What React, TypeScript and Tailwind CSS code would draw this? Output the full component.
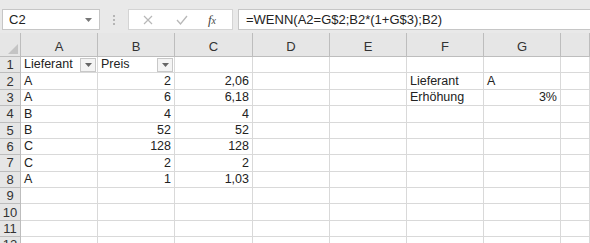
import React from 'react'

const cols = ['A', 'B', 'C', 'D', 'E', 'F', 'G', '']

type Cell = { v: string; right?: boolean; filter?: boolean }

const rows: Record<number, Record<number, Cell>> = {
  1: { 0: { v: 'Lieferant', filter: true }, 1: { v: 'Preis', filter: true } },
  2: { 0: { v: 'A' }, 1: { v: '2', right: true }, 2: { v: '2,06', right: true }, 5: { v: 'Lieferant' }, 6: { v: 'A' } },
  3: { 0: { v: 'A' }, 1: { v: '6', right: true }, 2: { v: '6,18', right: true }, 5: { v: 'Erhöhung' }, 6: { v: '3%', right: true } },
  4: { 0: { v: 'B' }, 1: { v: '4', right: true }, 2: { v: '4', right: true } },
  5: { 0: { v: 'B' }, 1: { v: '52', right: true }, 2: { v: '52', right: true } },
  6: { 0: { v: 'C' }, 1: { v: '128', right: true }, 2: { v: '128', right: true } },
  7: { 0: { v: 'C' }, 1: { v: '2', right: true }, 2: { v: '2', right: true } },
  8: { 0: { v: 'A' }, 1: { v: '1', right: true }, 2: { v: '1,03', right: true } },
}

const FilterButton = () => (
  <div className="absolute right-[1px] top-[1px] w-[16px] h-[14px] border border-[#c8c8c8] bg-[#f4f4f4] flex items-center justify-center">
    <svg width="7" height="4" viewBox="0 0 7 4">
      <path d="M0 0h7L3.5 4z" fill="#666" />
    </svg>
  </div>
)

export default function App() {
  return (
    <div className="w-[590px] h-[243px] overflow-hidden bg-white font-['Liberation_Sans',Arial,sans-serif] text-[#222]">
      {/* formula bar */}
      <div className="h-[33px] bg-[#e9e9e9] flex items-start pt-[9px] pl-[2px]">
        <div className="w-[98px] h-[21px] bg-white border border-[#c6c6c6] flex items-center pl-[6px] pr-[7px] text-[13px]">
          <span className="flex-1">C2</span>
          <svg width="7" height="4" viewBox="0 0 7 4">
            <path d="M0 0h7L3.5 4z" fill="#777" />
          </svg>
        </div>
        <div className="w-[28px] h-[21px] flex flex-col items-center justify-center gap-[2px]">
          <div className="w-[2px] h-[2px] bg-[#b5b5b5]" />
          <div className="w-[2px] h-[2px] bg-[#b5b5b5]" />
          <div className="w-[2px] h-[2px] bg-[#b5b5b5]" />
        </div>
        <div className="w-[105px] h-[21px] bg-white border border-[#d4d4d4] flex items-center">
          <div className="w-[38px] flex justify-center text-[#b8b8b8]">
            <svg width="10" height="10" viewBox="0 0 10 10">
              <path d="M1 1l8 8M9 1l-8 8" stroke="#b8b8b8" strokeWidth="1.2" />
            </svg>
          </div>
          <div className="w-[30px] flex justify-center">
            <svg width="12" height="10" viewBox="0 0 12 10">
              <path d="M1 5l3.5 4L11 1" stroke="#b8b8b8" strokeWidth="1.3" fill="none" />
            </svg>
          </div>
          <div className="w-[30px] flex justify-center font-['Liberation_Serif',serif] italic text-[13px] text-[#444]">
            <span>f<span className="text-[10px]">x</span></span>
          </div>
        </div>
        <div className="ml-[5px] flex-1 h-[21px] bg-white border border-[#c6c6c6] border-r-0 flex items-center pl-[7px] text-[13px]">
          =WENN(A2=G$2;B2*(1+G$3);B2)
        </div>
      </div>

      {/* grid */}
      <div className="grid grid-cols-[21px_77px_77px_78px_77px_77px_77px_77px_1fr] grid-rows-[24px_repeat(12,16.375px)] text-[12.5px] leading-none">
        <div className="relative bg-[#e6e6e6] border-r border-b border-[#bdbdbd]">
          <svg className="absolute right-[2px] bottom-[2px]" width="10" height="10" viewBox="0 0 10 10">
            <path d="M10 0v10H0z" fill="#c4c4c4" />
          </svg>
        </div>
        {cols.map((c, i) => (
          <div
            key={c + i}
            className="bg-[#e6e6e6] border-r border-b border-[#bdbdbd] flex items-end justify-center pb-[3px] text-[13px] text-[#333]"
          >
            {c}
          </div>
        ))}
        {Array.from({ length: 12 }, (_, r) => r + 1).map((r) => (
          <React.Fragment key={r}>
            <div className="bg-[#e6e6e6] border-r border-b border-[#bdbdbd] flex items-center justify-center text-[13px] text-[#333]">
              {r}
            </div>
            {cols.map((_, ci) => {
              const cell = rows[r]?.[ci]
              return (
                <div
                  key={ci}
                  className={`relative border-r border-b border-[#d9d9d9] flex items-center px-[3px] whitespace-nowrap ${
                    cell?.right ? 'justify-end' : ''
                  }`}
                >
                  {cell?.v}
                  {cell?.filter && <FilterButton />}
                </div>
              )
            })}
          </React.Fragment>
        ))}
      </div>
    </div>
  )
}
